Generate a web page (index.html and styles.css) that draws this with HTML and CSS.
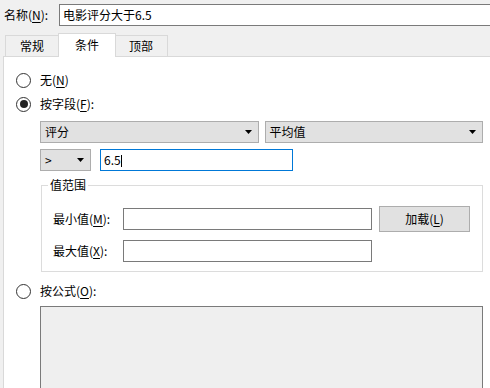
FILE: index.html
```
<!DOCTYPE html>
<html lang="zh">
<head>
<meta charset="utf-8">
<link rel="stylesheet" href="styles.css">
</head>
<body>
<div class="top">
  <span class="lbl">名称(<u>N</u>):</span>
  <div class="edit name">电影评分大于6.5</div>
</div>
<div class="tabs">
  <div class="tab">常规</div>
  <div class="tab active">条件</div>
  <div class="tab">顶部</div>
</div>
<div class="panel">
  <div class="radio-row"><span class="radio"></span><span>无(<u>N</u>)</span></div>
  <div class="radio-row"><span class="radio checked"></span><span>按字段(<u>F</u>):</span></div>
  <div class="indent">
    <div class="row combos">
      <div class="combo"><span>评分</span><svg class="arrow" width="7" height="4" viewBox="0 0 7 4"><polygon points="0,0 7,0 3.5,4" fill="#000"/></svg></div>
      <div class="combo"><span>平均值</span><svg class="arrow" width="7" height="4" viewBox="0 0 7 4"><polygon points="0,0 7,0 3.5,4" fill="#000"/></svg></div>
    </div>
    <div class="row cmp">
      <div class="combo small"><span>&gt;</span><svg class="arrow" width="7" height="4" viewBox="0 0 7 4"><polygon points="0,0 7,0 3.5,4" fill="#000"/></svg></div>
      <div class="edit value">6.5<span class="caret"></span></div>
    </div>
    <fieldset class="group">
      <legend>值范围</legend>
      <div class="grow">
        <span class="glbl">最小值(<u>M</u>):</span>
        <div class="edit range"></div>
        <button class="btn">加载(<u>L</u>)</button>
      </div>
      <div class="grow second">
        <span class="glbl">最大值(<u>X</u>):</span>
        <div class="edit range"></div>
      </div>
    </fieldset>
  </div>
  <div class="radio-row formula"><span class="radio"></span><span>按公式(<u>O</u>):</span></div>
  <div class="indent">
    <div class="formula-box"></div>
  </div>
</div>
</body>
</html>
```

FILE: styles.css
```
html {
  overflow: hidden;
}
body {
  margin: 0;
  background: #f0f0f0;
  font-family: "Noto Sans CJK SC", "Microsoft YaHei", sans-serif;
  font-size: 12px;
  line-height: 16px;
  color: #000;
}
u {
  text-decoration: underline;
  text-underline-offset: 2px;
}
.top {
  display: flex;
  align-items: center;
  padding: 4px 0 0 4px;
}
.lbl {
  width: 55px;
}
.edit {
  box-sizing: border-box;
  height: 22px;
  border: 1px solid #7a7a7a;
  background: #fff;
  padding: 0 3px;
  line-height: 20px;
  white-space: nowrap;
}
.name {
  flex: 1;
  margin-right: -6px;
}
.tabs {
  display: flex;
  align-items: flex-end;
  height: 23px;
  margin-top: 7px;
  padding-left: 5px;
}
.tab {
  box-sizing: border-box;
  width: 54px;
  height: 21px;
  border: 1px solid #d9d9d9;
  border-bottom: none;
  background: #f0f0f0;
  text-align: center;
  line-height: 20px;
}
.tab.active {
  width: 58px;
  height: 24px;
  margin: 0 -2px -1px -1px;
  background: #fff;
  position: relative;
  z-index: 1;
  line-height: 21px;
}
.panel {
  margin-left: 3px;
  border-top: 1px solid #d9d9d9;
  border-left: 1px solid #d9d9d9;
  background: #fff;
  padding: 11px 0 0 12px;
}
.radio-row {
  display: flex;
  align-items: center;
  height: 24px;
  gap: 9px;
}
.radio {
  box-sizing: border-box;
  width: 15px;
  height: 15px;
  border: 1px solid #333;
  border-radius: 50%;
  background: #fff;
  display: flex;
  align-items: center;
  justify-content: center;
}
.radio.checked::after {
  content: "";
  width: 8px;
  height: 8px;
  border-radius: 50%;
  background: #222;
}
.indent {
  margin-left: 24px;
  width: 443px;
}
.row {
  display: flex;
  gap: 6px;
}
.combos {
  margin-top: 5px;
}
.combo {
  box-sizing: border-box;
  flex: 1;
  height: 22px;
  border: 1px solid #adadad;
  background: #e1e1e1;
  display: flex;
  align-items: center;
  justify-content: space-between;
  padding: 0 6px 0 4px;
}
.cmp {
  margin-top: 6px;
  gap: 9px;
}
.combo.small {
  flex: none;
  width: 51px;
}
.value {
  width: 193px;
  border-color: #0078d7;
}
.caret {
  display: inline-block;
  width: 1px;
  height: 12px;
  background: #000;
  vertical-align: -2px;
}
.group {
  box-sizing: border-box;
  width: 442px;
  margin: 6px 0 0 1px;
  padding: 13px 0 9px 11px;
  border: 1px solid #dcdcdc;
  min-width: 0;
}
.group legend {
  padding: 0 2px;
  margin-left: -5px;
  line-height: 16px;
}
.grow {
  display: flex;
  align-items: center;
}
.grow.second {
  margin-top: 8px;
}
.glbl {
  width: 70px;
}
.range {
  width: 249px;
}
.btn {
  box-sizing: border-box;
  width: 91px;
  height: 26px;
  margin-left: 7px;
  border: 1px solid #adadad;
  background: #e1e1e1;
  font: inherit;
  color: #000;
  padding: 0;
}
.formula {
  margin-top: 7px;
}
.formula-box {
  box-sizing: border-box;
  margin-top: 3px;
  height: 82px;
  border: 1px solid #7a7a7a;
  border-bottom: none;
  background: #efefef;
}
```
